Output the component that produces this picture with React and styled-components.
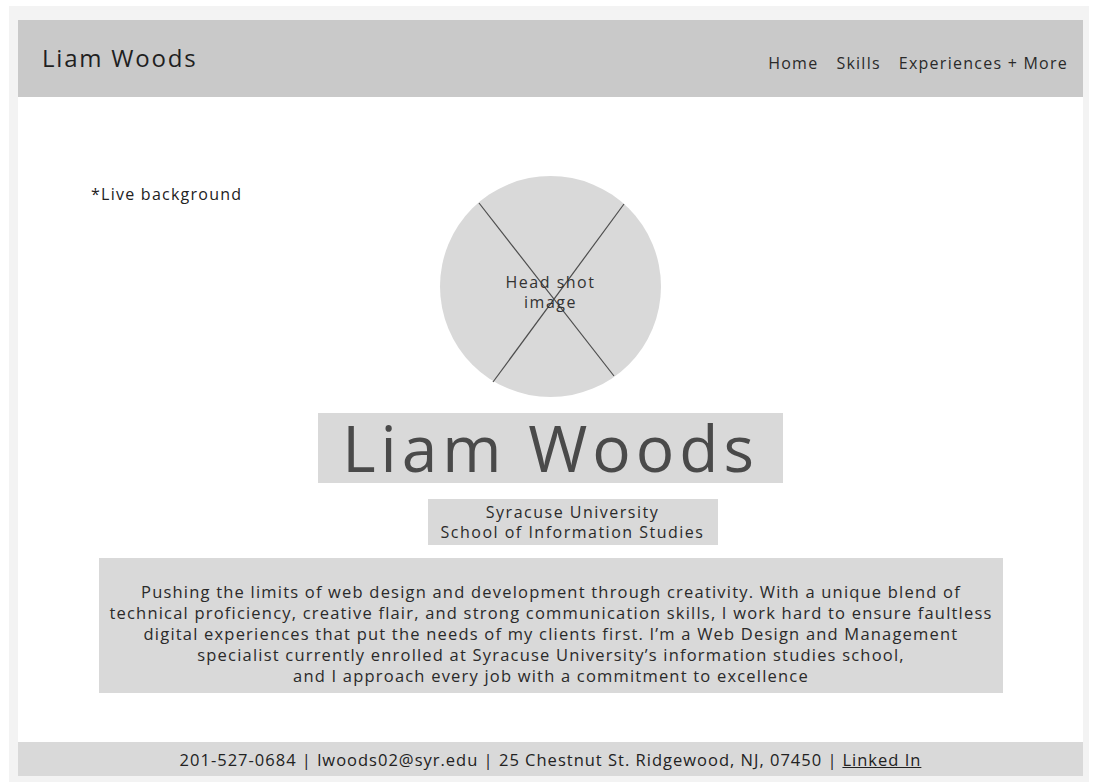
import React from 'react';
import styled, { createGlobalStyle } from 'styled-components';

const GlobalStyle = createGlobalStyle`
  body {
    margin: 0;
    background: #fff;
    font-family: "Open Sans", "Liberation Sans", sans-serif;
  }
`;

function App() {
  return (
    <Page>
      <GlobalStyle />
      <Frame>
        <Sheet>
          <TopBar>
            <Brand>Liam Woods</Brand>
            <Nav>
              <NavLink>Home</NavLink>
              <NavLink>Skills</NavLink>
              <NavLink>Experiences + More</NavLink>
            </Nav>
          </TopBar>

          <Main>
            <HeroRow>
              <Note>*Live background</Note>
              <Headshot>
                <CrossLines viewBox="0 0 221 221">
                  <line x1="39" y1="27" x2="174" y2="200" />
                  <line x1="184" y1="28" x2="53" y2="206" />
                </CrossLines>
                <HeadshotLabel>Head shot<br />image</HeadshotLabel>
              </Headshot>
              <div />
            </HeroRow>

            <NameBox>Liam Woods</NameBox>
            <SchoolBox>
              Syracuse University<br />
              School of Information Studies
            </SchoolBox>

            <Bio>
              Pushing the limits of web design and development through creativity. With a unique blend of<br />
              technical proficiency, creative flair, and strong communication skills, I work hard to ensure faultless<br />
              digital experiences that put the needs of my clients first. I’m a Web Design and Management<br />
              specialist currently enrolled at Syracuse University’s information studies school,<br />
              and I approach every job with a commitment to excellence
            </Bio>
          </Main>

          <Footer>
            201-527-0684 | lwoods02@syr.edu | 25 Chestnut St. Ridgewood, NJ, 07450 | <FooterLink>Linked In</FooterLink>
          </Footer>
        </Sheet>
      </Frame>
    </Page>
  );
}

const Page = styled.div`
  padding: 6px 5px 2px 9px;
`;

const Frame = styled.div`
  background: #f3f3f3;
  height: 776px;
  box-sizing: border-box;
  padding: 14px 6px 6px 9px;
`;

const Sheet = styled.div`
  background: #fff;
  height: 100%;
  display: flex;
  flex-direction: column;
`;

const TopBar = styled.header`
  height: 77px;
  flex-shrink: 0;
  background: #c9c9c9;
  display: flex;
  align-items: center;
  justify-content: space-between;
  padding: 0 15px 0 24px;
  color: #1f1f1f;
`;

const Brand = styled.div`
  font-size: 24px;
  letter-spacing: 1.8px;
  margin-top: -2px;
`;

const Nav = styled.nav`
  display: flex;
  gap: 18px;
  margin-top: 8px;
`;

const NavLink = styled.span`
  font-size: 16px;
  letter-spacing: 1.25px;
  color: #2a2a2a;
`;

const Main = styled.main`
  flex: 1;
  display: flex;
  flex-direction: column;
  align-items: center;
  padding-top: 79px;
`;

const HeroRow = styled.div`
  width: 100%;
  display: grid;
  grid-template-columns: 1fr auto 1fr;
`;

const Note = styled.div`
  align-self: start;
  padding: 7px 0 0 73px;
  font-size: 16px;
  letter-spacing: 1.25px;
  color: #222;
`;

const Headshot = styled.div`
  position: relative;
  width: 221px;
  height: 221px;
  border-radius: 50%;
  background: #d9d9d9;
  display: flex;
  align-items: center;
  justify-content: center;
`;

const CrossLines = styled.svg`
  position: absolute;
  inset: 0;
  width: 100%;
  height: 100%;
  line {
    stroke: #4d4d4d;
    stroke-width: 1.2;
  }
`;

const HeadshotLabel = styled.div`
  position: relative;
  margin-top: 10px;
  text-align: center;
  font-size: 16px;
  line-height: 20px;
  color: #333;
  letter-spacing: 1.5px;
`;

const NameBox = styled.h1`
  margin: 16px 0 0;
  width: 465px;
  height: 70px;
  box-sizing: border-box;
  background: #d9d9d9;
  color: #4a4a4a;
  font-size: 64px;
  font-weight: 400;
  line-height: 70px;
  text-align: center;
  letter-spacing: 5px;
`;

const SchoolBox = styled.div`
  margin: 16px 0 0 44px;
  width: 290px;
  height: 46px;
  box-sizing: border-box;
  background: #d9d9d9;
  padding-top: 3px;
  font-size: 16px;
  line-height: 20px;
  text-align: center;
  color: #2a2a2a;
  letter-spacing: 1.5px;
`;

const Bio = styled.p`
  margin: 13px 0 0 1px;
  width: 904px;
  height: 135px;
  box-sizing: border-box;
  background: #d9d9d9;
  padding-top: 23px;
  font-size: 16.5px;
  line-height: 21px;
  text-align: center;
  color: #2a2a2a;
  letter-spacing: 1.2px;
`;

const Footer = styled.footer`
  height: 34px;
  flex-shrink: 0;
  background: #d9d9d9;
  display: flex;
  align-items: center;
  justify-content: center;
  font-size: 16.5px;
  letter-spacing: 1px;
  color: #222;
`;

const FooterLink = styled.a`
  margin-left: 0.3em;
  color: #222;
  text-decoration: underline;
`;

export default App;
